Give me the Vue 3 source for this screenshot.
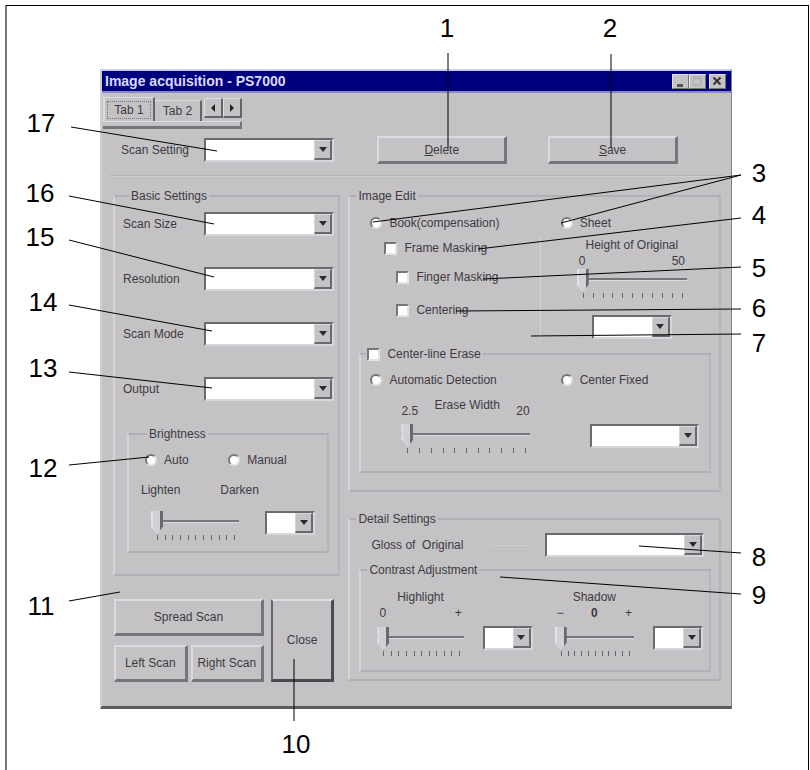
<script setup>
import { reactive } from 'vue'

// Callout geometry is given on an 810-unit wide sheet; x turns into a percentage.
const pct = (x) => `${(x / 810) * 100}%`

const callouts = [
  { n: 1, x: 447, y: 37, lines: [[448, 53, 448, 148]] },
  { n: 2, x: 610, y: 37, lines: [[611, 54, 611, 148]] },
  { n: 3, x: 759, y: 182, lines: [[741, 175, 373, 222], [741, 175, 561, 223]] },
  { n: 4, x: 759, y: 224, lines: [[741, 218, 478, 249]] },
  { n: 5, x: 759, y: 277, lines: [[741, 267, 483, 279]] },
  { n: 6, x: 759, y: 317, lines: [[741, 309, 456, 311]] },
  { n: 7, x: 759, y: 352, lines: [[741, 334, 531, 336]] },
  { n: 8, x: 759, y: 566, lines: [[741, 553, 639, 546]] },
  { n: 9, x: 759, y: 604, lines: [[741, 594, 500, 577]] },
  { n: 10, x: 296, y: 753, lines: [[294, 659, 294, 721]] },
  { n: 11, x: 41, y: 615, lines: [[69, 601, 120, 592]] },
  { n: 12, x: 43, y: 477, lines: [[69, 465, 149, 457]] },
  { n: 13, x: 43, y: 377, lines: [[69, 372, 212, 388]] },
  { n: 14, x: 43, y: 311, lines: [[69, 305, 212, 331]] },
  { n: 15, x: 40, y: 246, lines: [[69, 240, 214, 277]] },
  { n: 16, x: 40, y: 202, lines: [[69, 196, 214, 224]] },
  { n: 17, x: 41, y: 132, lines: [[71, 127, 217, 151]] },
]

const basics = [
  { id: 'size', label: 'Scan Size' },
  { id: 'resolution', label: 'Resolution' },
  { id: 'mode', label: 'Scan Mode' },
  { id: 'output', label: 'Output' },
]

const levels = reactive({ brightness: 0, height: 0, erase: 0, highlight: 0, shadow: 0 })
</script>

<template>
  <main class="sheet">
    <section class="dialog">
      <header class="titlebar">
        <h1>Image acquisition - PS7000</h1>
        <div class="winbuttons">
          <button type="button" aria-label="Minimize">
            <svg width="16" height="15" viewBox="0 0 16 15"><path d="M5 10h6v3H5z" fill="#555" /></svg>
          </button>
          <button type="button" aria-label="Maximize">
            <svg width="16" height="15" viewBox="0 0 16 15"><path d="M4 3h8v8H4zM4 4.500h8" fill="none" stroke="#aaa8ac" /></svg>
          </button>
          <button type="button" class="shut" aria-label="Close window">
            <svg width="16" height="15" viewBox="0 0 16 15"><path d="M4.500 3.500l7 7M11.500 3.500l-7 7" stroke="#333" stroke-width="2" /></svg>
          </button>
        </div>
      </header>

      <nav class="tabs">
        <div class="tabrow">
          <button type="button" class="tab current"><span>Tab 1</span></button>
          <button type="button" class="tab">Tab 2</button>
          <button type="button" class="arrow" aria-label="Previous tab">
            <svg width="8" height="8" viewBox="0 0 8 8"><path d="M6 0v8L2 4z" fill="#222" /></svg>
          </button>
          <button type="button" class="arrow" aria-label="Next tab">
            <svg width="8" height="8" viewBox="0 0 8 8"><path d="M2 0v8l4-4z" fill="#222" /></svg>
          </button>
        </div>
        <div class="tabedge"></div>
      </nav>

      <div class="toolbar">
        <div class="field">
          <label for="setting">Scan Setting</label>
          <span class="combo"><select id="setting"><option></option></select><i></i></span>
        </div>
        <div class="actions">
          <button type="button" class="push"><u>D</u>elete</button>
          <button type="button" class="push"><u>S</u>ave</button>
        </div>
      </div>
      <hr />

      <div class="columns">
        <div class="left">
          <fieldset class="basic">
            <legend>Basic Settings</legend>
            <div class="rows">
              <div v-for="b in basics" :key="b.id" class="field">
                <label :for="b.id">{{ b.label }}</label>
                <span class="combo"><select :id="b.id"><option></option></select><i></i></span>
              </div>
            </div>
            <fieldset class="brightness">
              <legend>Brightness</legend>
              <div class="pair">
                <label class="opt"><input type="radio" name="brightness" />Auto</label>
                <label class="opt"><input type="radio" name="brightness" />Manual</label>
              </div>
              <div class="pair ends"><span>Lighten</span><span>Darken</span></div>
              <div class="level">
                <div class="slider">
                  <input v-model="levels.brightness" type="range" aria-label="Brightness" />
                  <div class="ticks"><b v-for="t in 11" :key="t"></b></div>
                </div>
                <span class="combo small"><select aria-label="Brightness value"><option></option></select><i></i></span>
              </div>
            </fieldset>
          </fieldset>
          <div class="scans">
            <button type="button" class="push spread">Spread Scan</button>
            <button type="button" class="push">Left Scan</button>
            <button type="button" class="push">Right Scan</button>
            <button type="button" class="push close">Close</button>
          </div>
        </div>

        <div class="right">
          <fieldset class="edit">
            <legend>Image Edit</legend>
            <div class="halves">
              <div class="book">
                <label class="opt"><input type="radio" name="original" />Book(compensation)</label>
                <label class="opt in1"><input type="checkbox" />Frame Masking</label>
                <label class="opt in2"><input type="checkbox" />Finger Masking</label>
                <label class="opt in2"><input type="checkbox" />Centering</label>
              </div>
              <div class="sheetside">
                <label class="opt"><input type="radio" name="original" />Sheet</label>
                <div class="height">
                  <span class="caption">Height of Original</span>
                  <div class="scale"><span>0</span><span>50</span></div>
                  <div class="slider">
                    <input v-model="levels.height" type="range" aria-label="Height of Original" />
                    <div class="ticks"><b v-for="t in 11" :key="t"></b></div>
                  </div>
                  <span class="combo"><select aria-label="Height value"><option></option></select><i></i></span>
                </div>
              </div>
            </div>
            <fieldset class="erase">
              <legend><label class="opt"><input type="checkbox" />Center-line Erase</label></legend>
              <div class="halves">
                <div>
                  <label class="opt"><input type="radio" name="erase" />Automatic Detection</label>
                  <div class="width">
                    <div class="scale"><span>2.5</span><span class="mid">Erase Width</span><span>20</span></div>
                    <div class="slider">
                      <input v-model="levels.erase" type="range" aria-label="Erase Width" />
                      <div class="ticks"><b v-for="t in 11" :key="t"></b></div>
                    </div>
                  </div>
                </div>
                <div class="fixed">
                  <label class="opt"><input type="radio" name="erase" />Center Fixed</label>
                  <span class="combo"><select aria-label="Center Fixed value"><option></option></select><i></i></span>
                </div>
              </div>
            </fieldset>
          </fieldset>

          <fieldset class="detail">
            <legend>Detail Settings</legend>
            <div class="gloss">
              <label for="gloss">Gloss of&nbsp; Original</label>
              <span class="rule"></span>
              <span class="combo"><select id="gloss"><option></option></select><i></i></span>
            </div>
            <fieldset class="contrast">
              <legend>Contrast Adjustment</legend>
              <div class="tone">
                <div class="gauge">
                  <span class="caption">Highlight</span>
                  <div class="scale"><span>0</span><span>+</span></div>
                  <div class="slider">
                    <input v-model="levels.highlight" type="range" aria-label="Highlight" />
                    <div class="ticks"><b v-for="t in 11" :key="t"></b></div>
                  </div>
                </div>
                <span class="combo small"><select aria-label="Highlight value"><option></option></select><i></i></span>
              </div>
              <div class="tone">
                <div class="gauge">
                  <span class="caption">Shadow</span>
                  <div class="scale"><span>−</span><strong>0</strong><span>+</span></div>
                  <div class="slider">
                    <input v-model="levels.shadow" type="range" aria-label="Shadow" />
                    <div class="ticks"><b v-for="t in 11" :key="t"></b></div>
                  </div>
                </div>
                <span class="combo small"><select aria-label="Shadow value"><option></option></select><i></i></span>
              </div>
            </fieldset>
          </fieldset>
        </div>
      </div>
    </section>

    <svg class="callouts">
      <g v-for="c in callouts" :key="c.n">
        <line
          v-for="(l, i) in c.lines"
          :key="i"
          :x1="pct(l[0])"
          :y1="l[1]"
          :x2="pct(l[2])"
          :y2="l[3]"
        />
        <text :x="pct(c.x)" :y="c.y">{{ c.n }}</text>
      </g>
    </svg>
  </main>
</template>

<style>
body {
  background: #fff;
}
#app {
  display: flow-root;
}
</style>

<style scoped>
* {
  box-sizing: border-box;
}
.sheet {
  position: relative;
  min-height: 100vh;
  padding: 5px 1px 0 6px;
  font: 12px/16px "Liberation Sans", Arial, sans-serif;
  color: #3c3a3e;
  background:
    linear-gradient(#000, #000) 6px 5px / calc(100% - 7px) 1px no-repeat,
    linear-gradient(#777, #777) 5px 5px / 2px 100% no-repeat,
    linear-gradient(#000, #000) calc(100% - 1px) 5px / 1px 100% no-repeat;
}
.dialog {
  margin: 64px 77px 0 94px;
  padding-bottom: 24px;
  background: #c5c2c6;
  border-top: 2px solid #c8c8f0;
  border-left: 2px solid #d0ced2;
  border-right: 1px solid #848286;
  border-bottom: 3px solid #5c5a5e;
}
button {
  font: inherit;
  color: inherit;
  background: #c5c2c6;
  padding: 0;
  margin: 0;
}
.titlebar {
  display: flex;
  align-items: center;
  justify-content: space-between;
  height: 22px;
  padding: 0 5px 0 3px;
  background: #00007f;
  border-bottom: 2px solid #8886c8;
}
h1 {
  margin: 0;
  font-size: 14px;
  line-height: 16px;
  color: #dcdcff;
}
.winbuttons {
  display: flex;
}
.winbuttons button {
  width: 17px;
  height: 15px;
  border: 1px solid #e4e2e6;
  border-right-color: #777;
  border-bottom-color: #777;
  overflow: hidden;
}
.winbuttons svg {
  display: block;
  margin: -1px;
}
.winbuttons .shut {
  margin-left: 3px;
}
.tabs {
  width: 139px;
  margin: 4px 0 0 1px;
}
.tabrow {
  display: flex;
  align-items: flex-end;
  height: 24px;
}
.tab {
  height: 21px;
  width: 47px;
  border: 0;
  border-top: 1px solid #e0dee2;
  border-right: 2px solid #666468;
}
.tab.current {
  width: 52px;
  height: 24px;
  padding: 2px;
  border-left: 2px solid #dedce0;
}
.tab.current span {
  display: block;
  border: 1px dotted #77757a;
  line-height: 16px;
}
.arrow {
  display: grid;
  place-items: center;
  width: 19px;
  height: 20px;
  margin-bottom: 3px;
  border: 1px solid #e0dee2;
  border-right: 2px solid #666468;
  border-bottom: 2px solid #666468;
}
.arrow:nth-child(3) {
  margin-left: 2px;
}
.tabedge {
  height: 8px;
  border-top: 1px solid #dedce0;
  border-right: 2px solid #77757a;
  border-bottom: 3px solid #77757a;
}
.toolbar {
  display: grid;
  grid-template-columns: 227fr 372fr;
  gap: 8px;
  margin: 7px 10px 0 11px;
}
.field {
  display: flex;
  align-items: center;
  justify-content: space-between;
}
.toolbar .field {
  padding: 0 6px 0 8px;
  height: 27px;
}
.combo {
  position: relative;
  display: block;
  height: 24px;
  border: 2px solid #d8d6da;
  border-top-color: #6c6a6e;
  border-left-color: #6c6a6e;
  background: #fff;
}
.field .combo {
  flex: 0 0 130px;
}
.combo.small {
  flex: 0 0 50px;
}
.combo select {
  appearance: none;
  display: block;
  width: 100%;
  height: 100%;
  margin: 0;
  padding: 0 18px 0 3px;
  border: 0;
  border-radius: 0;
  background: #fff;
  font: inherit;
  color: #000;
}
.combo i {
  position: absolute;
  top: 0;
  right: 0;
  bottom: 0;
  width: 18px;
  background: #c5c2c6;
  border: 1px solid #d8d6da;
  border-right: 2px solid #6a686c;
  border-bottom: 2px solid #6a686c;
  pointer-events: none;
}
.combo i::after {
  content: "";
  display: block;
  width: 0;
  margin: 6px auto 0;
  border: 4px solid transparent;
  border-top: 5px solid #2c2a2e;
  border-bottom: 0;
}
.actions {
  display: grid;
  grid-template-columns: 1fr 1fr;
  gap: 41px;
  padding: 0 43px 0 29px;
}
.push {
  border: 2px solid #dcdade;
  border-right: 3px solid #77757a;
  border-bottom: 3px solid #77757a;
}
.actions .push {
  height: 28px;
}
hr {
  height: 2px;
  margin: 11px 8px;
  border: 0;
  border-top: 1px solid #b6b3b8;
  border-bottom: 1px solid #cfccd0;
}
.columns {
  display: grid;
  grid-template-columns: 227fr 372fr;
  gap: 8px;
  margin: 0 10px 0 11px;
}
fieldset {
  min-width: 0;
  margin: 0;
  padding: 0;
  border: 2px solid;
  border-color: #b2afb4 #b8b5ba #b2afb4 #d6d4d8;
}
legend {
  margin-left: 6px;
  padding: 0 2px;
}
.basic {
  padding: 8px 4px 21px 8px;
}
.rows {
  display: grid;
  gap: 31px;
}
.rows .field {
  height: 24px;
}
.brightness {
  margin: 25px 5px 0 4px;
  padding: 10px 12px 11px 12px;
}
.pair {
  display: grid;
  grid-template-columns: 86fr 90fr;
  padding-left: 4px;
}
.pair.ends {
  margin-top: 14px;
  grid-template-columns: 80fr 96fr;
  padding-left: 0;
}
.opt {
  display: flex;
  align-items: center;
  height: 16px;
  gap: 7px;
  white-space: nowrap;
}
.opt input {
  appearance: none;
  flex: none;
  width: 13px;
  height: 13px;
  margin: 0;
  background: #fff;
  border: 2px solid #e4e2e6;
  border-top-color: #77757a;
  border-left-color: #77757a;
}
.opt input[type="radio"] {
  width: 12px;
  height: 12px;
  border-radius: 50%;
}
.opt input:checked {
  background: radial-gradient(#000 0 2px, #fff 3px);
}
.level {
  display: flex;
  justify-content: space-between;
  margin-top: 13px;
  padding-left: 10px;
}
.level .slider {
  flex: 0 1 88px;
}
.slider input {
  appearance: none;
  display: block;
  width: 100%;
  height: 22px;
  margin: 0;
  background: linear-gradient(#77757a 0 2px, #dcdade 2px) 0 9px / 100% 3px no-repeat;
}
.slider input::-webkit-slider-thumb {
  appearance: none;
  width: 12px;
  height: 22px;
  background: linear-gradient(90deg, #e4e2e6 0 2px, #d2d0d4 2px 9px, #6a686c 9px);
  clip-path: polygon(0 0, 100% 0, 100% 70%, 60% 100%, 40% 100%, 0 70%);
}
.ticks {
  display: flex;
  justify-content: space-between;
  height: 5px;
  margin-top: 2px;
  padding: 0 4px 0 6px;
}
.ticks b {
  width: 1px;
  background: #66646a;
}
.scans {
  display: grid;
  grid-template-columns: 72fr 72fr 66fr;
  grid-template-rows: 37px 37px;
  gap: 9px 3px;
  margin: 23px 6px 0 1px;
}
.spread {
  grid-column: 1 / 3;
}
.close {
  grid-column: 3;
  grid-row: 1 / 3;
  margin-left: 4px;
  border-color: #e0dee2 #4c4a4e #4c4a4e #66646a;
}
.halves {
  display: grid;
  grid-template-columns: 189fr 179fr;
}
.edit {
  padding: 11px 0 17px;
}
.book {
  padding-left: 20px;
}
.opt.in1 {
  margin: 9px 0 13px 14px;
}
.opt.in2 {
  margin: 0 0 17px 26px;
}
.sheetside .opt {
  padding-left: 21px;
}
.height {
  display: flex;
  flex-direction: column;
  margin: 4px 8px 0 0;
  padding: 2px 24px 0 36px;
  border-left: 1px solid #d4d2d6;
}
.caption {
  text-align: center;
}
.scale {
  display: flex;
  justify-content: space-between;
  padding: 0 2px;
}
.height .combo {
  align-self: center;
  width: 80px;
  margin: 17px 0 0;
}
.erase {
  margin: 7px 8px 0 9px;
  padding: 10px 0 18px;
}
.erase legend {
  margin-left: 5px;
  padding: 0 2px 0 1px;
}
.erase .halves {
  grid-template-columns: 178fr 169fr;
}
.erase .halves .opt {
  padding-left: 9px;
}
.width {
  margin: 9px 10px 0 40px;
}
.width .scale {
  align-items: flex-end;
  height: 22px;
  margin-bottom: 5px;
  padding: 0;
}
.mid {
  align-self: flex-start;
}
.erase .halves .fixed .opt {
  padding-left: 21px;
}
.fixed .combo {
  margin: 36px 10px 0 50px;
}
.detail {
  margin-top: 19px;
  padding: 6px 0 7px;
}
.gloss {
  display: flex;
  align-items: center;
  padding: 0 15px 0 21px;
}
.gloss .combo {
  flex: 0 0 159px;
}
.rule {
  flex: 1;
  height: 1px;
  margin: 0 14px 0 28px;
  background: #cfccd0;
}
.contrast {
  display: grid;
  grid-template-columns: 177fr 170fr;
  margin: 5px 8px 0 9px;
  padding: 11px 0 14px;
}
.tone {
  display: flex;
  align-items: flex-end;
  gap: 19px;
  padding: 0 6px 0 16px;
}
.gauge {
  display: flex;
  flex: 1;
  flex-direction: column;
}
.gauge .slider {
  margin-top: 6px;
}
.tone .combo {
  margin-bottom: 6px;
}
.callouts {
  position: absolute;
  top: 0;
  left: 0;
  width: 100%;
  height: 770px;
  pointer-events: none;
}
.callouts line {
  stroke: #000;
  stroke-width: 1px;
}
.callouts text {
  font-size: 26px;
  fill: #000;
  text-anchor: middle;
}
</style>
